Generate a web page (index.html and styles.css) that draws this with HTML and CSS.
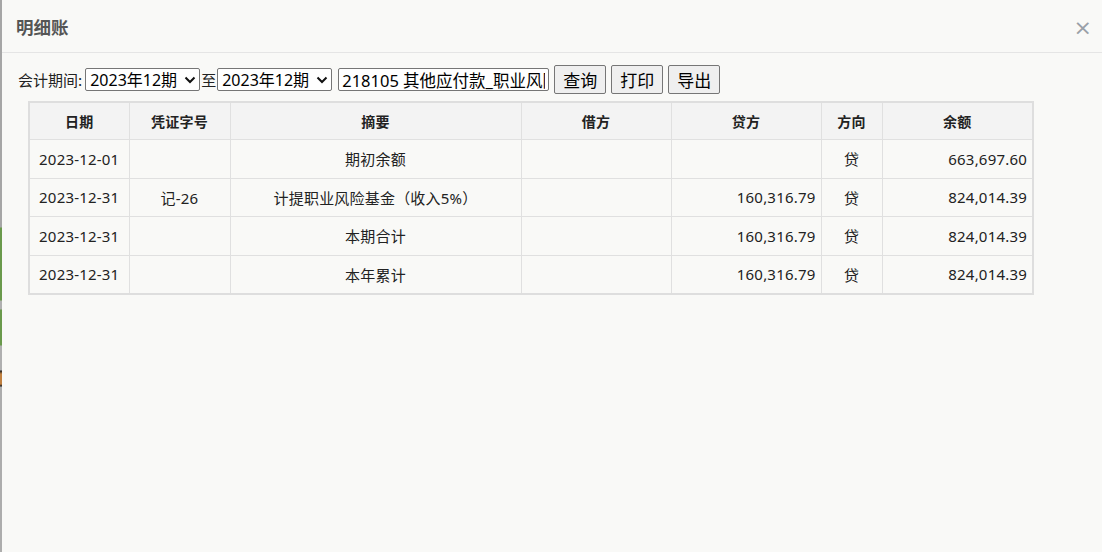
FILE: index.html
```html
<!DOCTYPE html>
<html lang="zh-CN">
<head>
<meta charset="utf-8">
<title>明细账</title>
<link rel="stylesheet" href="styles.css">
</head>
<body>
<div class="page">
  <div class="edge"></div>
  <div class="dialog">
    <div class="header">
      <span class="title">明细账</span>
      <span class="close">×</span>
    </div>
    <div class="toolbar">
      <span class="label">会计期间:</span>
      <select class="sel"><option>2023年12期</option></select><span class="to">至</span><select class="sel"><option>2023年12期</option></select>
      <input class="acct" type="text" value="218105 其他应付款_职业风险基金">
      <button class="btn">查询</button>
      <button class="btn">打印</button>
      <button class="btn">导出</button>
    </div>
    <table class="grid">
      <colgroup>
        <col class="c1"><col class="c2"><col class="c3"><col class="c4"><col class="c5"><col class="c6"><col class="c7">
      </colgroup>
      <thead>
        <tr><th>日期</th><th>凭证字号</th><th>摘要</th><th>借方</th><th>贷方</th><th>方向</th><th>余额</th></tr>
      </thead>
      <tbody>
        <tr><td class="ctr">2023-12-01</td><td class="ctr"></td><td class="ctr">期初余额</td><td class="num"></td><td class="num"></td><td class="ctr">贷</td><td class="num">663,697.60</td></tr>
        <tr><td class="ctr">2023-12-31</td><td class="ctr">记-26</td><td class="ctr">计提职业风险基金（收入5%）</td><td class="num"></td><td class="num">160,316.79</td><td class="ctr">贷</td><td class="num">824,014.39</td></tr>
        <tr><td class="ctr">2023-12-31</td><td class="ctr"></td><td class="ctr">本期合计</td><td class="num"></td><td class="num">160,316.79</td><td class="ctr">贷</td><td class="num">824,014.39</td></tr>
        <tr><td class="ctr">2023-12-31</td><td class="ctr"></td><td class="ctr">本年累计</td><td class="num"></td><td class="num">160,316.79</td><td class="ctr">贷</td><td class="num">824,014.39</td></tr>
      </tbody>
    </table>
  </div>
</div>
</body>
</html>
```
FILE: styles.css
```css
html, body {
  margin: 0;
  padding: 0;
  height: 100%;
  background: #f9f9f7;
}
.page {
  display: flex;
  height: 552px;
  overflow: hidden;
  font-family: "Noto Sans", "Noto Sans CJK SC", sans-serif;
  color: #222;
}
.edge {
  width: 2px;
  flex: none;
  background: linear-gradient(to bottom,
    #a6a6a6 0, #a6a6a6 227px,
    #6a9a4c 228px, #6a9a4c 300px,
    #b0b0b0 301px, #b0b0b0 309px,
    #6a9a4c 310px, #6a9a4c 345px,
    #b0b0b0 346px, #b0b0b0 370px,
    #222 371px, #c08040 374px, #c08040 384px, #222 386px,
    #adadad 387px, #adadad 552px);
}
.dialog {
  flex: 1;
  display: flex;
  flex-direction: column;
}
.header {
  height: 53px;
  border-bottom: 1px solid #e5e5e5;
  display: flex;
  align-items: center;
  justify-content: space-between;
  padding: 0 10px 0 14px;
  box-sizing: border-box;
}
.title {
  font-family: "Noto Sans CJK SC", sans-serif;
  font-size: 17.5px;
  font-weight: bold;
  color: #555;
  margin-top: 1px;
}
.close {
  font-family: "DejaVu Sans", sans-serif;
  font-size: 22px;
  color: #9aa0a8;
  margin-top: 4px;
  line-height: 1;
}
.toolbar {
  display: flex;
  align-items: center;
  padding: 12px 0 0 16px;
  height: 29px;
  font-family: "Noto Sans CJK SC", sans-serif;
}
.label {
  font-size: 15px;
  margin-right: 3px;
}
.sel {
  -webkit-appearance: none;
  appearance: none;
  font-family: "Noto Sans", "Noto Sans CJK SC", sans-serif;
  font-size: 16px;
  height: 23px;
  width: 115px;
  padding: 0 0 0 4px;
  border: 1px solid #767676;
  border-radius: 2px;
  background-color: #fff;
  background-image: url("data:image/svg+xml,%3Csvg xmlns='http://www.w3.org/2000/svg' width='12' height='8' viewBox='0 0 12 8'%3E%3Cpath d='M1.5 1.5 L6 6 L10.5 1.5' fill='none' stroke='%23111' stroke-width='2'/%3E%3C/svg%3E");
  background-repeat: no-repeat;
  background-position: right 3px center;
  background-size: 12px 8px;
  color: #000;
}
.to {
  font-size: 15px;
  margin: 0 1px;
}
.acct {
  font-family: "Noto Sans", "Noto Sans CJK SC", sans-serif;
  font-size: 16.5px;
  height: 23px;
  width: 211px;
  box-sizing: border-box;
  padding: 0 3px;
  margin-left: 6px;
  border: 1px solid #767676;
  border-radius: 2px;
  background: #fff;
  color: #000;
}
.btn {
  font-family: "Noto Sans CJK SC", sans-serif;
  font-size: 17px;
  height: 29px;
  width: 52px;
  margin-left: 5px;
  padding: 0;
  border: 1px solid #767676;
  border-radius: 2px;
  background: #efefef;
  color: #000;
}
.grid {
  margin: 7px 0 0 26px;
  width: 1004px;
  border-collapse: collapse;
  border: 2px solid #dedede;
  table-layout: fixed;
  font-size: 15px;
  letter-spacing: 0.2px;
}
.c1 { width: 100px; }
.c2 { width: 101px; }
.c3 { width: 291px; }
.c4 { width: 150px; }
.c5 { width: 150px; }
.c6 { width: 61px; }
.c7 { width: 151px; }
.grid th {
  font-family: "Noto Sans CJK SC", sans-serif;
  font-size: 14px;
  letter-spacing: 0.3px;
  background: #f3f3f3;
  font-weight: bold;
  height: 36px;
  border: 1px solid #e0e0e0;
  padding: 0;
}
.grid td {
  height: 37.5px;
  border: 1px solid #e0e0e0;
  padding: 0 5px;
  white-space: nowrap;
}
.ctr { text-align: center; }
.num { text-align: right; }
```
